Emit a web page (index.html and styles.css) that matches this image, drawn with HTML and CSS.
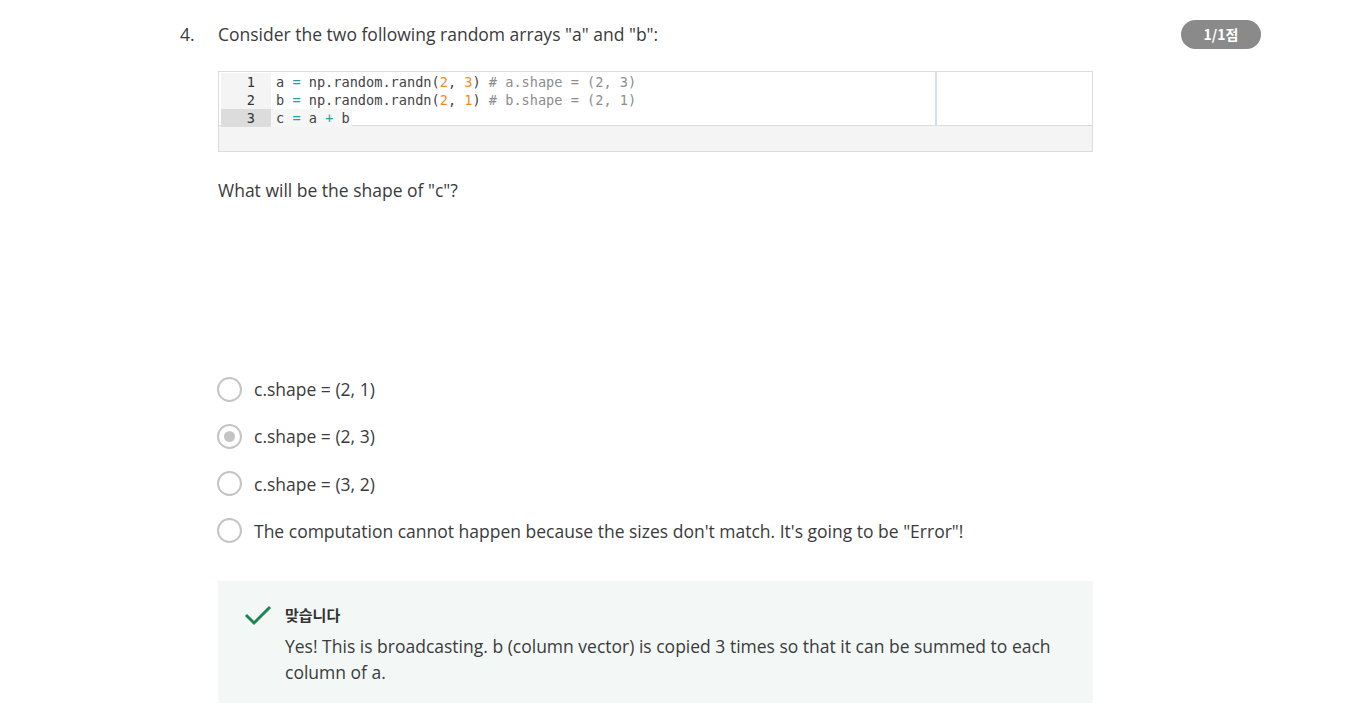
FILE: index.html
```html
<!DOCTYPE html>
<html>
<head>
<meta charset="utf-8">
<link rel="stylesheet" href="styles.css">
</head>
<body>
<div class="page">
  <div class="question">
    <div class="qnum">4.</div>
    <div class="qbody">
      <div class="qhead">
        <div class="prompt">Consider the two following random arrays "a" and "b":</div>
        <div class="badge">1/1점</div>
      </div>
      <div class="code">
        <div class="editor">
          <div class="gutter">
            <div class="ln">1</div>
            <div class="ln">2</div>
            <div class="ln active">3</div>
          </div>
          <div class="lines">
            <div class="line">a <span class="op">=</span> np.random.randn(<span class="num">2</span>, <span class="num">3</span>) <span class="cm"># a.shape = (2, 3)</span></div>
            <div class="line">b <span class="op">=</span> np.random.randn(<span class="num">2</span>, <span class="num">1</span>) <span class="cm"># b.shape = (2, 1)</span></div>
            <div class="line"><span class="activebg">c <span class="op">=</span> a <span class="op">+</span> b</span></div>
            <div class="margin"></div>
          </div>
        </div>
        <div class="codefoot"></div>
      </div>
      <p class="sub">What will be the shape of "c"?</p>
      <div class="options">
        <div class="opt"><span class="radio"></span><span>c.shape = (2, 1)</span></div>
        <div class="opt"><span class="radio checked"></span><span>c.shape = (2, 3)</span></div>
        <div class="opt"><span class="radio"></span><span>c.shape = (3, 2)</span></div>
        <div class="opt"><span class="radio"></span><span>The computation cannot happen because the sizes don't match. It's going to be "Error"!</span></div>
      </div>
      <div class="feedback">
        <svg class="check" width="28" height="22" viewBox="0 0 28 22"><path d="M2 11 L10 19 L26 3" fill="none" stroke="#1f8354" stroke-width="3"/></svg>
        <div class="fbtext">
          <div class="fbtitle">맞습니다</div>
          <div class="fbmsg">Yes! This is broadcasting. b (column vector) is copied 3 times so that it can be summed to each column of a.</div>
        </div>
      </div>
    </div>
  </div>
</div>
</body>
</html>
```

FILE: styles.css
```css
* { box-sizing: border-box; }
html, body { margin: 0; padding: 0; background: #fff; }
body {
  font-family: "Open Sans", "Noto Sans CJK KR", sans-serif;
  color: #3b3b3b;
  width: 1370px;
  height: 711px;
  overflow: hidden;
}
.page { padding: 20px 0 0 180px; }
.question { display: flex; }
.qnum { width: 38px; font-size: 17.5px; line-height: 28px; color: #3b3b3b; }
.qbody { width: 875px; }
.qhead { display: flex; align-items: flex-start; width: 1043px; }
.prompt { flex: 1; font-size: 17.5px; line-height: 28px; }
.badge {
  width: 80px; height: 29px;
  border-radius: 15px;
  background: #8a8a8a;
  color: #fff;
  font-family: "Noto Sans CJK KR", sans-serif;
  font-weight: 700;
  font-size: 14px;
  line-height: 29px;
  text-align: center;
}
.code {
  margin-top: 22px;
  border: 1px solid #dcdcdc;
  background: #f4f4f4;
  height: 81px;
}
.editor {
  display: flex;
  background: #fff;
  height: 54px;
  border-bottom: 1px solid #dcdcdc;
  padding-top: 1px;
  padding-left: 2px;
}
.gutter { width: 50px; background: #f4f4f4; }
.ln {
  height: 18px;
  line-height: 18px;
  text-align: right;
  padding-right: 16px;
  font-family: "DejaVu Sans Mono", monospace;
  font-size: 13.6px;
  color: #333;
}
.ln.active { background: #dcdcdc; }
.lines { position: relative; flex: 1; }
.line {
  height: 18px;
  line-height: 18px;
  padding-left: 5px;
  font-family: "DejaVu Sans Mono", monospace;
  font-size: 13.6px;
  color: #444;
  white-space: pre;
}
.activebg { background: #f6f6f6; display: inline-block; height: 18px; padding-right: 2px; margin-left: -5px; padding-left: 5px; }
.op { color: #2a9ca6; }
.num { color: #f08c1e; }
.cm { color: #8d8d8d; }
.margin {
  position: absolute;
  left: 664px; top: -1px;
  width: 2px; height: 54px;
  background: #d3dfe7;
}
.codefoot { height: 25px; }
.sub { margin: 24px 0 0; font-size: 17.5px; line-height: 28px; }
.options { margin-top: 171px; display: flex; flex-direction: column; gap: 19.3px; }
.opt { display: flex; align-items: center; font-size: 17.5px; line-height: 28px; }
.radio {
  width: 25px; height: 25px;
  border: 2px solid #c4c4c4;
  border-radius: 50%;
  margin-left: -1px;
  margin-right: 12px;
  display: flex; align-items: center; justify-content: center;
}
.radio.checked::after {
  content: "";
  width: 11px; height: 11px;
  border-radius: 50%;
  background: #c4c4c4;
}
.feedback {
  margin-top: 36px;
  background: #f3f8f7;
  display: flex;
  padding: 22px 30px 20px 26px;
  height: 122px;
}
.check { margin-top: 1px; margin-right: 13px; flex: none; }
.fbtitle {
  font-family: "Noto Sans CJK KR", sans-serif;
  font-weight: 700;
  font-size: 15px;
  line-height: 24px;
  color: #333;
}
.fbmsg { margin-top: 6px; font-size: 17.5px; line-height: 26px; width: 780px; }
```
